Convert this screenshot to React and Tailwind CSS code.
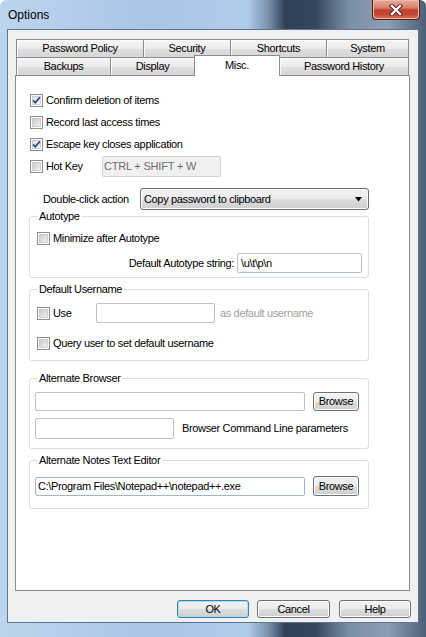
import React from "react";

function Box({ checked }) {
  return (
    <svg width="13" height="13" viewBox="0 0 13 13" className="shrink-0 block">
      <defs>
        <linearGradient id="cbU" x1="0" y1="0" x2="1" y2="1">
          <stop offset="0" stopColor="#c4c7cc" />
          <stop offset="1" stopColor="#f3f3f3" />
        </linearGradient>
        <linearGradient id="cbC" x1="0" y1="0" x2="1" y2="1">
          <stop offset="0" stopColor="#d9dbde" />
          <stop offset="1" stopColor="#f8f8f8" />
        </linearGradient>
      </defs>
      <rect x="0.5" y="0.5" width="12" height="12" fill="#fbfbfb" stroke="#8e8f8f" />
      <rect x="2.5" y="2.5" width="8" height="8" fill={checked ? "url(#cbC)" : "url(#cbU)"} stroke="#b7bbc1" strokeWidth="0.6" />
      {checked && (
        <path d="M3.1 6.4 L5.3 8.7 L9.9 3.4" fill="none" stroke="#2c4a8a" strokeWidth="1.7" />
      )}
    </svg>
  );
}

function CheckRow({ checked, label, className }) {
  return (
    <div className={"flex items-center h-[22px] gap-[3px] " + (className || "")}>
      <Box checked={checked} />
      <span>{label}</span>
    </div>
  );
}

function Btn({ children, className }) {
  return (
    <div
      className={
        "flex items-center justify-center rounded-[3px] border border-[#707070] bg-[linear-gradient(180deg,#f2f2f2,#ebebeb_50%,#dddddd_51%,#cfcfcf)] shadow-[inset_0_0_0_1px_#fcfcfc] " +
        (className || "")
      }
    >
      {children}
    </div>
  );
}

const tab =
  "flex items-center justify-center border-t border-l border-r border-[#898c95] bg-[linear-gradient(180deg,#f5f5f5,#ebebeb_50%,#dedede_55%,#d6d6d6)] shadow-[inset_1px_1px_0_#fbfbfb]";

export default function App() {
  return (
    <div className="w-[426px] h-[637px] bg-white font-['Liberation_Sans',Arial,sans-serif] text-[11px] leading-[13px] tracking-[-0.35px] text-black overflow-hidden">
      <div className="w-[426px] h-[637px] rounded-t-[6px] bg-[linear-gradient(90deg,#bdd4ee_0%,#a9c6e7_35%,#b1cbea_58%,#7a91ad_63%,#2f4158_67%,#34475f_74%,#7b8fa7_82%,#8b9eb4_91%,#4d5f77_100%)] flex flex-col">
        {/* title bar */}
        <div className="h-[29px] flex items-start">
          <span className="pl-[8px] pt-[8px] text-[12px] leading-[14px] tracking-normal text-black">Options</span>
          <div className="ml-auto mr-[6px] w-[48px] h-[20px] rounded-b-[4px] border border-t-0 border-[#4a1d17] bg-[linear-gradient(180deg,#e9ad9e,#d97d6b_42%,#c0412e_52%,#c44a35_78%,#dc7a62)] shadow-[inset_0_0_0_1px_#f0b8a8] flex items-center justify-center">
            <svg width="14" height="12" viewBox="0 0 14 12">
              <path d="M3 2 L11 10 M11 2 L3 10" stroke="#5a2119" strokeWidth="4.2" strokeLinecap="square" />
              <path d="M3 2 L11 10 M11 2 L3 10" stroke="#ffffff" strokeWidth="2.3" strokeLinecap="square" />
            </svg>
          </div>
        </div>

        {/* client area */}
        <div className="ml-[7px] w-[412px] h-[594px] border border-[#5f7490] bg-[#f0f0f0] flex flex-col">
          {/* tabs */}
          <div className="ml-[8px] mt-[9px] flex flex-col">
            <div className="flex h-[18px]">
              <div className={tab + " w-[128px]"}>Password Policy</div>
              <div className={tab + " w-[88px] -ml-px"}>Security</div>
              <div className={tab + " w-[97px] -ml-px"}>Shortcuts</div>
              <div className={tab + " w-[83px] -ml-px"}>System</div>
            </div>
            <div className="flex h-[18px]">
              <div className={tab + " w-[95px]"}>Backups</div>
              <div className={tab + " w-[85px] -ml-px"}>Display</div>
              <div className="relative z-10 w-[86px] h-[21px] -mt-[2px] -ml-px bg-white border-t border-l border-r border-[#898c95] flex items-center justify-center pb-[2px]">
                Misc.
              </div>
              <div className={tab + " w-[130px] -ml-px"}>Password History</div>
            </div>
          </div>

          {/* panel */}
          <div className="ml-[7px] w-[395px] h-[516px] bg-white border border-[#898c95] pt-[13px] pl-[13px] flex flex-col items-start">
            <CheckRow checked label="Confirm deletion of items" className="ml-px" />
            <CheckRow label="Record last access times" className="ml-px" />
            <CheckRow checked label="Escape key closes application" className="ml-px" />
            <div className="flex items-center h-[22px] ml-px">
              <Box />
              <span className="ml-[3px] w-[56px]">Hot Key</span>
              <div className="w-[119px] h-[21px] border border-[#cfd3d8] bg-[#f0f0f0] rounded-[2px] flex items-center pl-[1px] text-[#6d6d6d] tracking-[-0.2px]">
                CTRL + SHIFT + W
              </div>
            </div>

            <div className="flex items-center h-[22px] mt-[11px] ml-[14px]">
              <span className="w-[97px]">Double-click action</span>
              <Btn className="w-[229px] h-[22px] !justify-between pl-[3px] pr-[5px]">
                <span>Copy password to clipboard</span>
                <svg width="8" height="5" viewBox="0 0 8 5">
                  <path d="M0 0 H7 L3.5 4.5 Z" fill="#000" />
                </svg>
              </Btn>
            </div>

            {/* Autotype */}
            <fieldset className="w-[340px] border border-[#d5dfe5] rounded-[3px] px-[5px] pb-[4px] flex flex-col items-stretch">
              <legend className="ml-[2px] px-[2px] leading-[13px]">Autotype</legend>
              <CheckRow label="Minimize after Autotype" className="ml-[2px] mt-[4px]" />
              <div className="flex items-center justify-end gap-[3px] mt-[4px] mr-[1px] h-[20px]">
                <span>Default Autotype string:</span>
                <div className="w-[125px] h-[20px] border border-[#b9c1cb] rounded-[2px] bg-white flex items-center pl-[3px]">
                  {"\\u\\t\\p\\n"}
                </div>
              </div>
            </fieldset>

            {/* Default Username */}
            <fieldset className="w-[340px] mt-[5px] border border-[#d5dfe5] rounded-[3px] px-[5px] pb-[6px] flex flex-col items-start">
              <legend className="ml-[2px] px-[2px] leading-[13px]">Default Username</legend>
              <div className="flex items-center h-[22px] mt-[6px] ml-[2px]">
                <Box />
                <span className="ml-[3px] w-[43px]">Use</span>
                <div className="w-[119px] h-[20px] border border-[#b9c1cb] rounded-[2px] bg-white" />
                <span className="ml-[5px] text-[#a0a0a0]">as default username</span>
              </div>
              <CheckRow label="Query user to set default username" className="ml-[2px] mt-[8px]" />
            </fieldset>

            {/* Alternate Browser */}
            <fieldset className="w-[340px] mt-[11px] border border-[#d5dfe5] rounded-[3px] px-[5px] pb-[9px] flex flex-col items-start">
              <legend className="ml-[2px] px-[2px] leading-[13px]">Alternate Browser</legend>
              <div className="flex items-center gap-[8px] mt-[7px] h-[19px]">
                <div className="w-[270px] h-[19px] border border-[#b9c1cb] rounded-[2px] bg-white" />
                <Btn className="w-[46px] h-[19px]">Browse</Btn>
              </div>
              <div className="flex items-center gap-[8px] mt-[7px] h-[21px]">
                <div className="w-[139px] h-[21px] border border-[#b9c1cb] rounded-[2px] bg-white" />
                <span>Browser Command Line parameters</span>
              </div>
            </fieldset>

            {/* Alternate Notes Text Editor */}
            <fieldset className="w-[340px] mt-[5px] border border-[#d5dfe5] rounded-[3px] px-[5px] pb-[12px] flex flex-col items-start">
              <legend className="ml-[2px] px-[2px] leading-[13px]">Alternate Notes Text Editor</legend>
              <div className="flex items-center gap-[8px] mt-[9px] h-[20px]">
                <div className="w-[270px] h-[19px] border border-[#9fb6d0] rounded-[2px] bg-white flex items-center pl-[2px]">
                  {"C:\\Program Files\\Notepad++\\notepad++.exe"}
                </div>
                <Btn className="w-[46px] h-[20px]">Browse</Btn>
              </div>
            </fieldset>
          </div>

          {/* buttons */}
          <div className="flex justify-end mt-[9px] pr-[7px]">
            <Btn className="w-[72px] h-[18px] !border-[#3c7fb1] !shadow-[inset_0_0_0_1px_#a9dcf6]">OK</Btn>
            <Btn className="w-[73px] h-[18px] ml-[8px]">Cancel</Btn>
            <Btn className="w-[72px] h-[18px] ml-[9px]">Help</Btn>
          </div>
        </div>
      </div>
    </div>
  );
}
